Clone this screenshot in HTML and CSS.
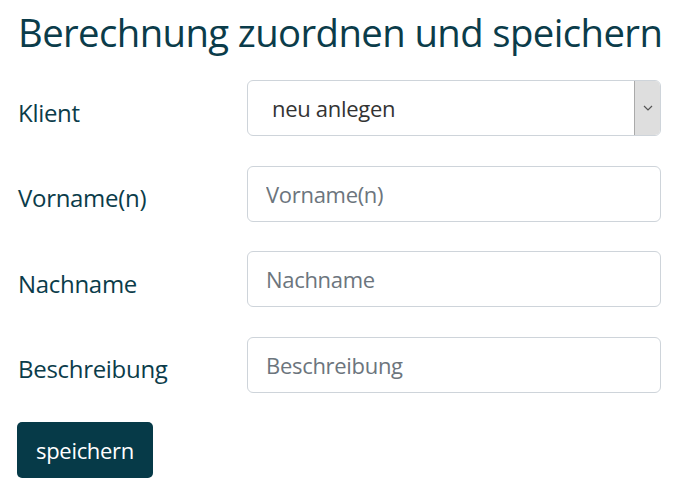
FILE: index.html
```html
<!DOCTYPE html>
<html lang="de">
<head>
<meta charset="utf-8">
<title>Berechnung zuordnen und speichern</title>
<link rel="stylesheet" href="styles.css">
</head>
<body>
<div class="page">
  <h1 class="title">Berechnung zuordnen und speichern</h1>
  <form class="form">
    <label class="label">Klient</label>
    <div class="select">
      <span class="select-text">neu anlegen</span>
      <span class="select-btn"><svg width="10" height="6" viewBox="0 0 10 6"><path d="M1 1l4 4 4-4" fill="none" stroke="#555" stroke-width="1.2"/></svg></span>
    </div>
    <label class="label">Vorname(n)</label>
    <input class="input" type="text" placeholder="Vorname(n)">
    <label class="label">Nachname</label>
    <input class="input" type="text" placeholder="Nachname">
    <label class="label">Beschreibung</label>
    <input class="input" type="text" placeholder="Beschreibung">
  </form>
  <button class="btn" type="button">speichern</button>
</div>
</body>
</html>
```
FILE: styles.css
```css
html, body {
  margin: 0;
  padding: 0;
  background: #ffffff;
}
.page {
  padding: 0 18px;
  font-family: "Open Sans", "Noto Sans", sans-serif;
  color: #0b3c4a;
}
.title {
  margin: 0;
  padding-top: 6px;
  font-size: 38.3px;
  font-weight: 400;
  line-height: 52px;
  letter-spacing: -0.6px;
  color: #0b3c4a;
  white-space: nowrap;
}
.form {
  display: grid;
  grid-template-columns: 229px 414px;
  row-gap: 29.5px;
  margin-top: 22px;
}
.label {
  align-self: center;
  padding-top: 8px;
  font-size: 24px;
  letter-spacing: -0.3px;
  color: #0b3c4a;
}
.input, .select {
  box-sizing: border-box;
  width: 414px;
  height: 56px;
  border: 1px solid #ced4da;
  border-radius: 6px;
  background: #fff;
  font-family: "Open Sans", "Noto Sans", sans-serif;
  font-size: 22px;
  letter-spacing: -0.3px;
  padding: 0 18px;
  color: #333;
  outline: none;
}
.input::placeholder {
  color: #6c757d;
}
.select {
  display: flex;
  align-items: stretch;
  padding: 0 0 0 24px;
}
.select-text {
  flex: 1;
  display: flex;
  align-items: center;
  color: #333;
}
.select-btn {
  width: 25px;
  background: #dedede;
  border-left: 1px solid #aaa;
  border-top-right-radius: 5px;
  border-bottom-right-radius: 5px;
  display: flex;
  align-items: center;
  justify-content: center;
}
.btn {
  margin-top: 29px;
  margin-left: -1px;
  width: 136px;
  height: 56px;
  border: none;
  border-radius: 5px;
  background: #063a48;
  color: #ffffff;
  font-family: "Open Sans", "Noto Sans", sans-serif;
  font-size: 22px;
  letter-spacing: -0.3px;
  cursor: pointer;
}
```
